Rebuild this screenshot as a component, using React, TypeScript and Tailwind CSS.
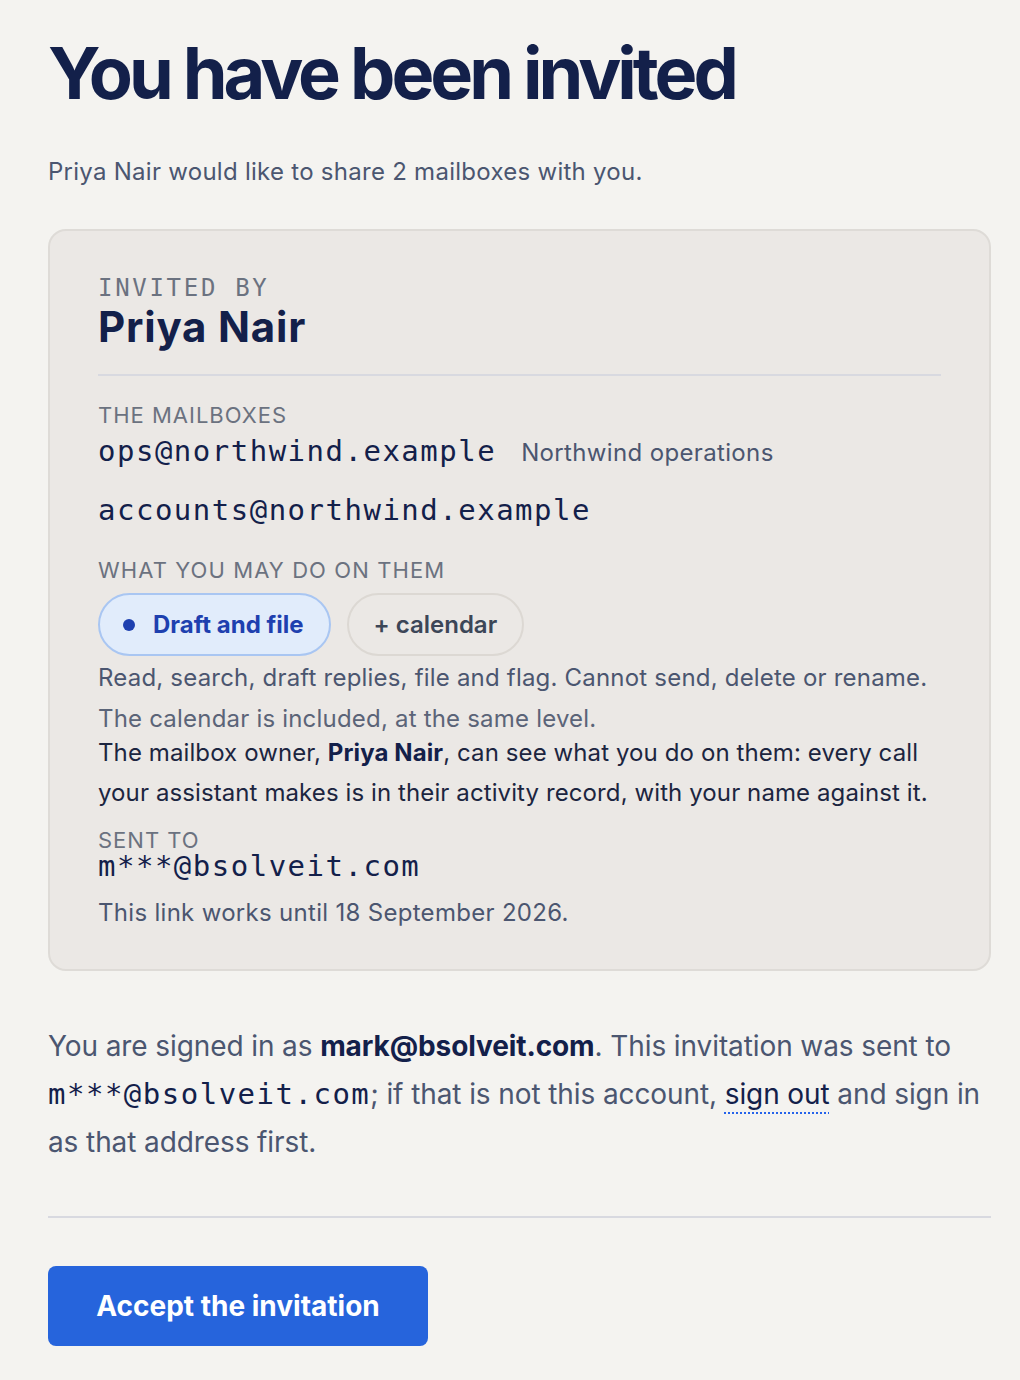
import React from "react";

const mono = "font-['DejaVu_Sans_Mono',monospace] text-[29px] tracking-[1.5px] text-[#13204a]";

export default function App() {
  return (
    <div className="min-h-[1380px] bg-[#f4f3f0] pl-12 pt-[33px] font-[Inter,sans-serif] text-[#4b5670]">
      <div className="w-[943px]">
        <h1 className="text-[72px] leading-[80px] font-bold tracking-[-4px] text-[#13204a] whitespace-nowrap">
          You have been invited
        </h1>
        <p className="mt-[43px] text-[24px] leading-[32px] tracking-[0.27px] text-[#4b5670]">
          Priya Nair would like to share 2 mailboxes with you.
        </p>

        <section className="mt-[41px] rounded-[18px] border-2 border-[#dedbd7] bg-[#ebe8e5] px-12 pt-[43px] pb-[40px]">
          <div className="font-['DejaVu_Sans_Mono',monospace] text-[24px] leading-[28px] tracking-[2.7px] text-[#6b7280]">
            INVITED BY
          </div>
          <div className="mt-[3px] text-[42px] leading-[44px] font-bold tracking-[0.8px] text-[#13204a]">Priya Nair</div>

          <div className="mt-[25px] h-[2px] bg-[#d8d9e0]" />

          <div className="mt-[25px] text-[22px] leading-[28px] tracking-[1px] text-[#6b7280]">THE MAILBOXES</div>
          <div className="mt-[2px] flex items-baseline gap-[25px] leading-[40px]">
            <span className={mono}>ops@northwind.example</span>
            <span className="text-[24px] tracking-[0.35px] text-[#4b5670]">Northwind operations</span>
          </div>
          <div className="mt-[17px] leading-[40px]">
            <span className={mono}>accounts@northwind.example</span>
          </div>

          <div className="mt-[22px] text-[22px] leading-[28px] tracking-[1.1px] text-[#6b7280]">WHAT YOU MAY DO ON THEM</div>
          <div className="mt-[9px] flex gap-4">
            <div className="flex h-[63px] items-center gap-[18px] rounded-full border-2 border-[#a9c6f2] bg-[#e1ecfb] pl-[23px] pr-[25px]">
              <span className="h-3 w-3 rounded-full bg-[#1e40af]" />
              <span className="text-[24px] font-bold text-[#1e40af]">Draft and file</span>
            </div>
            <div className="flex h-[63px] items-center rounded-full border-2 border-[#dcd8d3] px-[25px]">
              <span className="text-[24px] font-semibold text-[#3c4657]">+ calendar</span>
            </div>
          </div>
          <p className="mt-[2px] whitespace-nowrap text-[24px] leading-[40px] tracking-[0.2px] text-[#4b5670]">
            Read, search, draft replies, file and flag. Cannot send, delete or rename.
          </p>
          <p className="mt-[7px] whitespace-nowrap text-[24px] leading-[28px] tracking-[0.2px] text-[#5b6478]">
            The calendar is included, at the same level.
          </p>
          <p className="whitespace-nowrap text-[24px] leading-[40px] tracking-[0.1px] text-[#1c2540]">
            The mailbox owner, <b className="font-bold text-[#13204a]">Priya Nair</b>, can see what you do on them: every call
            <br />
            your assistant makes is in their activity record, with your name against it.
          </p>

          <div className="mt-[16px] text-[22px] leading-[22px] tracking-[1px] text-[#6b7280]">SENT TO</div>
          <div className="leading-[30px]">
            <span className={mono}>m***@bsolveit.com</span>
          </div>
          <p className="mt-[12px] text-[24px] leading-[32px] tracking-[0.3px] text-[#4b5670]">
            This link works until 18 September 2026.
          </p>
        </section>

        <p className="mt-[51px] whitespace-nowrap text-[28px] leading-[48px] tracking-[-0.1px] text-[#4b5670]">
          You are signed in as <b className="font-bold text-[#13204a]">mark@bsolveit.com</b>. This invitation was sent to
          <br />
          <span className={mono}>m***@bsolveit.com</span>; if that is not this account,{" "}
          <a className="text-[#13204a] underline decoration-dotted decoration-[#2563eb] decoration-2 underline-offset-[8px]">
            sign out
          </a>{" "}
          and sign in
          <br />
          as that address first.
        </p>

        <div className="mt-[50px] h-[2px] bg-[#d8d9e0]" />

        <button className="mt-[48px] flex h-[80px] w-[380px] items-center justify-center rounded-lg bg-[#2664dc] text-[28px] font-bold text-white">
          Accept the invitation
        </button>
      </div>
    </div>
  );
}
